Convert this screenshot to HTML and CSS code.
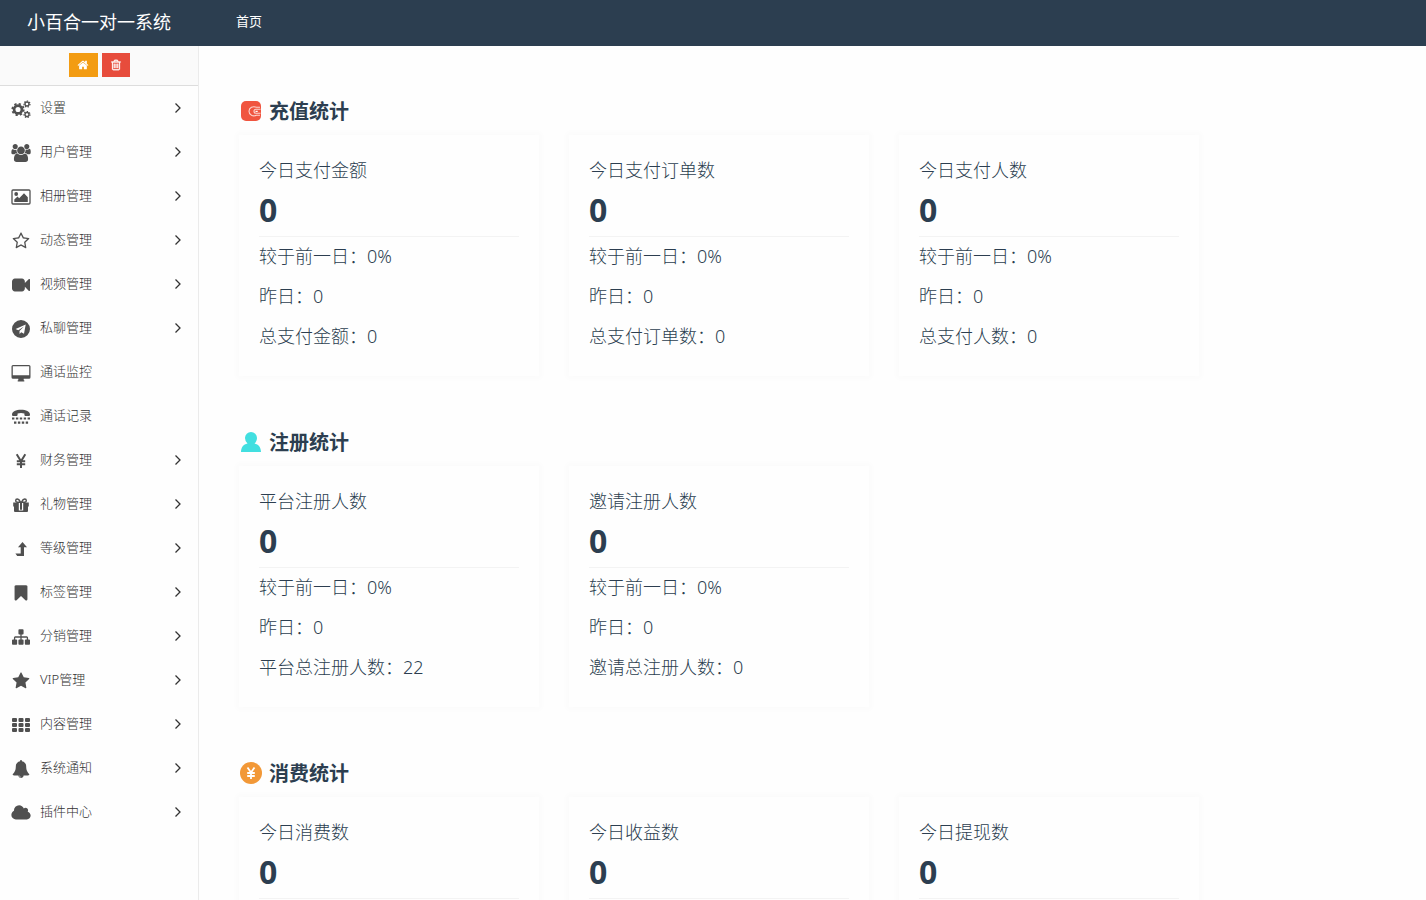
FILE: index.html
```
<!DOCTYPE html>
<html lang="zh-CN">
<head>
    <meta charset="UTF-8">
    <meta name="viewport" content="width=device-width, initial-scale=1.0">
    <title>小百合一对一系统</title>
    <link rel="stylesheet" href="styles.css">
</head>
<body>
    <!-- icons -->
    <svg class="sprite" aria-hidden="true">
        <symbol id="i-home" viewBox="0 0 1792 1792"><path d="M1472 992v480q0 26-19 45t-45 19h-384v-384h-256v384h-384q-26 0-45-19t-19-45v-480q0-1 .5-3t.5-3l575-474 575 474q1 2 1 6zm223-69l-62 74q-8 9-21 11h-3q-13 0-21-7l-692-577-692 577q-12 8-24 7-13-2-21-11l-62-74q-8-10-7-23.5t11-21.5l719-599q32-26 76-26t76 26l244 204v-195q0-14 9-23t23-9h192q14 0 23 9t9 23v408l219 182q10 8 11 21.5t-7 23.5z"/></symbol>
        <symbol id="i-trash" viewBox="0 0 1792 1792"><path stroke="currentColor" stroke-width="50" d="M704 736v576q0 14-9 23t-23 9h-64q-14 0-23-9t-9-23v-576q0-14 9-23t23-9h64q14 0 23 9t9 23zm256 0v576q0 14-9 23t-23 9h-64q-14 0-23-9t-9-23v-576q0-14 9-23t23-9h64q14 0 23 9t9 23zm256 0v576q0 14-9 23t-23 9h-64q-14 0-23-9t-9-23v-576q0-14 9-23t23-9h64q14 0 23 9t9 23zm128 724v-948h-896v948q0 22 7 40.500t14.500 27 10.500 8.500h832q3 0 10.500-8.500t14.500-27 7-40.500zm-672-1076h448l-48-117q-7-9-17-11h-317q-10 2-17 11zm928 32v64q0 14-9 23t-23 9h-96v948q0 83-47 143.500t-113 60.500h-832q-66 0-113-58.500t-47-141.500v-952h-96q-14 0-23-9t-9-23v-64q0-14 9-23t23-9h309l70-167q15-37 54-63t79-26h320q40 0 79 26t54 63l70 167h309q14 0 23 9t9 23z"/></symbol>
        <symbol id="i-cogs" viewBox="0 0 20 18">
            <g fill="none" stroke="currentColor">
                <circle cx="7" cy="9.500" r="3.900" stroke-width="2.700"/>
                <circle cx="7" cy="9.500" r="5.700" stroke-width="1.800" stroke-dasharray="2.240 2.240"/>
                <circle cx="16" cy="4" r="2" stroke-width="1.400"/>
                <circle cx="16" cy="4" r="3" stroke-width="1.200" stroke-dasharray="1.350 1.350"/>
                <circle cx="16" cy="14.500" r="2" stroke-width="1.400"/>
                <circle cx="16" cy="14.500" r="3" stroke-width="1.200" stroke-dasharray="1.350 1.350"/>
            </g>
        </symbol>
        <symbol id="i-users" viewBox="0 0 2048 1792"><path d="M657 896q-162 5-265 128h-134q-82 0-138-40.500t-56-118.500q0-353 124-353 6 0 43.500 21t97.500 42.500 119 21.500q67 0 133-23-5 37-5 66 0 159 93 293zm1071 637q0 120-73 189.500t-194 69.500h-874q-121 0-194-69.500t-73-189.500q0-53 3.500-103.500t14-109 26.500-108.500 43-97.500 62-81 85.500-53.500 111.500-20q10 0 43 21.500t73 48 107 48 135 21.500 135-21.500 107-48 73-48 43-21.500q61 0 111.500 20t85.500 53.500 62 81 43 97.500 26.500 108.500 14 109 3.500 103.500zm-1024-1277q0 106-75 181t-181 75-181-75-75-181 75-181 181-75 181 75 75 181zm704 384q0 159-112.500 271.500t-271.500 112.500-271.500-112.500-112.500-271.500 112.500-271.500 271.500-112.500 271.500 112.500 112.500 271.500zm576 225q0 78-56 118.500t-138 40.500h-134q-103-123-265-128 93-134 93-293 0-29-5-66 66 23 133 23 59 0 119-21.500t97.500-42.500 43.500-21q124 0 124 353zm-128-609q0 106-75 181t-181 75-181-75-75-181 75-181 181-75 181 75 75 181z"/></symbol>
        <symbol id="i-image" viewBox="0 0 20 18">
            <rect x="1" y="2" width="18" height="14" rx="1" fill="none" stroke="currentColor" stroke-width="1.300"/>
            <circle cx="5.200" cy="6" r="1.900"/>
            <path d="M3.300 14v-2.400L6.500 8.500 8.200 10.200 13 5.300 16.800 9.200V14z"/>
        </symbol>
        <symbol id="i-star-o" viewBox="0 0 1792 1792"><path d="M1201 1004l306-297-422-62-189-382-189 382-422 62 306 297-73 421 378-199 377 199zm527-357q0 22-26 48l-363 354 86 500q1 7 1 20 0 50-41 50-19 0-40-12l-449-236-449 236q-22 12-40 12-21 0-31.500-14.500t-10.500-35.500q0-6 2-20l86-500-364-354q-25-27-25-48 0-37 56-46l502-73 225-455q19-41 49-41t49 41l225 455 502 73q56 9 56 46z"/></symbol>
        <symbol id="i-video" viewBox="0 0 1792 1792"><path d="M1792 352v1088q0 42-39 59-13 5-25 5-27 0-45-19l-403-403v166q0 119-84.500 203.500t-203.500 84.500h-704q-119 0-203.500-84.500t-84.500-203.500v-704q0-119 84.500-203.500t203.500-84.500h704q119 0 203.500 84.500t84.500 203.500v165l403-402q18-19 45-19 12 0 25 5 39 17 39 59z"/></symbol>
        <symbol id="i-telegram" viewBox="0 0 18 18"><path fill-rule="evenodd" d="M9 0a9 9 0 1 1 0 18A9 9 0 0 1 9 0zM13.700 4.600 3.600 8.900l2.700 1.300 5.600-3.800-4.400 4.500.1 3.100 1.600-1.800 2.800 1.500z"/></symbol>
        <symbol id="i-desktop" viewBox="0 0 20 18"><path fill-rule="evenodd" d="M2 1h16a1.500 1.500 0 0 1 1.500 1.500v10.800a1.500 1.500 0 0 1-1.500 1.500h-5.300v1.400h.6v1.300H6.700v-1.300h.6v-1.400H2a1.500 1.500 0 0 1-1.500-1.500V2.500A1.500 1.500 0 0 1 2 1zM1.800 2.300v8.900h16.400V2.300z"/></symbol>
        <symbol id="i-tty" viewBox="0 0 18 18">
            <path d="M0 6.500C0 3.500 4 1.800 9 1.800s9 1.700 9 4.700c0 1-.5 1.500-1.500 1.500h-2.600c-1 0-1.500-.5-1.500-1.500V5.400C10.500 4.700 7.500 4.700 5.600 5.400v1.100C5.600 7.500 5 8 4 8H1.500C.5 8 0 7.500 0 6.500z"/>
            <path d="M0 9.500h2.400v2H0zM3.900 9.500h2.400v2H3.900zM7.800 9.500h2.400v2H7.800zM11.700 9.500h2.400v2h-2.400zM15.600 9.500H18v2h-2.400zM2 13.500h2.400v2.200H2zM5.900 13.500h2.400v2.200H5.900zM9.800 13.500h2.400v2.200H9.800zM13.700 13.500h2.400v2.200h-2.400z"/>
        </symbol>
        <symbol id="i-yen" viewBox="0 0 18 18"><path fill="none" stroke="currentColor" stroke-width="2" d="M4.700 2.300 9 9.300l4.300-7M9 9v7M4.800 9.300h8.400M4.800 12.200h8.400"/></symbol>
        <symbol id="i-gift" viewBox="0 0 18 18">
            <path d="M1.200 6.500h5.600v4H1.200zM2 10.500h4.800V16H3a1 1 0 0 1-1-1zM11.200 6.500h5.600v4h-5.600zM11.200 10.500H16V15a1 1 0 0 1-1 1h-3.800zM6.800 14.600h4.400V16H6.800zM8 6.500h2v7.200H8z"/>
            <path fill="none" stroke="currentColor" stroke-width="1.400" d="M8.500 6C7.500 4 6.500 3 5.300 3a1.600 1.600 0 0 0 0 3.200h7.400a1.600 1.600 0 0 0 0-3.200C11.500 3 10.500 4 9.500 6"/>
        </symbol>
        <symbol id="i-level-up" viewBox="0 0 18 18"><path d="M10.500 2 15 7.200h-3V16H5.200L3.400 13.500h5.300V7.200H6z"/></symbol>
        <symbol id="i-bookmark" viewBox="0 0 1792 1792"><path d="M1420 128q23 0 44 9 33 13 52.500 41t19.500 62v1289q0 34-19.500 62t-52.500 41q-19 8-44 8-48 0-83-32l-441-424-441 424q-36 33-83 33-23 0-44-9-33-13-52.500-41t-19.500-62v-1289q0-34 19.500-62t52.500-41q21-9 44-9h1048z"/></symbol>
        <symbol id="i-sitemap" viewBox="0 0 1792 1792"><path d="M1792 1248v320q0 40-28 68t-68 28h-320q-40 0-68-28t-28-68v-320q0-40 28-68t68-28h96v-192h-512v192h96q40 0 68 28t28 68v320q0 40-28 68t-68 28h-320q-40 0-68-28t-28-68v-320q0-40 28-68t68-28h96v-192h-512v192h96q40 0 68 28t28 68v320q0 40-28 68t-68 28h-320q-40 0-68-28t-28-68v-320q0-40 28-68t68-28h96v-192q0-52 38-90t90-38h512v-192h-96q-40 0-68-28t-28-68v-320q0-40 28-68t68-28h320q40 0 68 28t28 68v320q0 40-28 68t-68 28h-96v192h512q52 0 90 38t38 90v192h96q40 0 68 28t28 68z"/></symbol>
        <symbol id="i-star" viewBox="0 0 1792 1792"><path d="M1728 647q0 22-26 48l-363 354 86 500q1 7 1 20 0 21-10.500 35.500t-30.500 14.500q-19 0-40-12l-449-236-449 236q-22 12-40 12-21 0-31.500-14.500t-10.500-35.500q0-6 2-20l86-500-364-354q-25-27-25-48 0-37 56-46l502-73 225-455q19-41 49-41t49 41l225 455 502 73q56 9 56 46z"/></symbol>
        <symbol id="i-th" viewBox="0 0 18 18">
            <g><rect x="0" y="2" width="5" height="4" rx="1"/><rect x="6.500" y="2" width="5" height="4" rx="1"/><rect x="13" y="2" width="5" height="4" rx="1"/></g>
            <g><rect x="0" y="7" width="5" height="4" rx="1"/><rect x="6.500" y="7" width="5" height="4" rx="1"/><rect x="13" y="7" width="5" height="4" rx="1"/></g>
            <g><rect x="0" y="12" width="5" height="4" rx="1"/><rect x="6.500" y="12" width="5" height="4" rx="1"/><rect x="13" y="12" width="5" height="4" rx="1"/></g>
        </symbol>
        <symbol id="i-bell" viewBox="0 0 1792 1792"><path d="M912 1696q0-16-16-16-59 0-101.500-42.500t-42.500-101.500q0-16-16-16t-16 16q0 73 51.500 124.500t124.500 51.500q16 0 16-16zm816-288q0 52-38 90t-90 38h-448q0 106-75 181t-181 75-181-75-75-181h-448q-52 0-90-38t-38-90q50-42 91-88t85-119.500 74.500-158.500 50-206 19.500-260q0-152 117-282.500t307-158.500q-8-19-8-39 0-40 28-68t68-28 68 28 28 68q0 20-8 39 190 28 307 158.500t117 282.500q0 139 19.500 260t50 206 74.500 158.500 85 119.500 91 88z"/></symbol>
        <symbol id="i-cloud" viewBox="0 0 2048 1792"><path d="M1984 1152q0 159-112.500 271.500t-271.500 112.500h-1088q-185 0-316.500-131.500t-131.500-316.500q0-132 71-241.500t187-163.500q-2-28-2-43 0-212 150-362t362-150q158 0 286.500 88t187.500 230q70-62 166-62 106 0 181 75t75 181q0 75-41 138 129 30 213 134.500t84 239.500z"/></symbol>
        <symbol id="i-angle" viewBox="0 0 8 12"><path fill="none" stroke="currentColor" stroke-width="1.300" d="M1.500 1.500 6 6l-4.500 4.500"/></symbol>
    </svg>

    <header class="navbar">
        <a class="brand" href="#">小百合一对一系统</a>
        <nav><a class="nav-link" href="#">首页</a></nav>
    </header>

    <div class="layout">
        <aside class="sidebar">
            <div class="shortcuts">
                <button class="btn btn-warning" type="button" aria-label="首页"><svg><use href="#i-home"/></svg></button>
                <button class="btn btn-danger" type="button" aria-label="清除缓存"><svg><use href="#i-trash"/></svg></button>
            </div>
            <nav class="menu">
                <a href="#"><svg class="icon"><use href="#i-cogs"/></svg><span>设置</span><svg class="angle"><use href="#i-angle"/></svg></a>
                <a href="#"><svg class="icon"><use href="#i-users"/></svg><span>用户管理</span><svg class="angle"><use href="#i-angle"/></svg></a>
                <a href="#"><svg class="icon"><use href="#i-image"/></svg><span>相册管理</span><svg class="angle"><use href="#i-angle"/></svg></a>
                <a href="#"><svg class="icon"><use href="#i-star-o"/></svg><span>动态管理</span><svg class="angle"><use href="#i-angle"/></svg></a>
                <a href="#"><svg class="icon"><use href="#i-video"/></svg><span>视频管理</span><svg class="angle"><use href="#i-angle"/></svg></a>
                <a href="#"><svg class="icon"><use href="#i-telegram"/></svg><span>私聊管理</span><svg class="angle"><use href="#i-angle"/></svg></a>
                <a href="#"><svg class="icon"><use href="#i-desktop"/></svg><span>通话监控</span></a>
                <a href="#"><svg class="icon"><use href="#i-tty"/></svg><span>通话记录</span></a>
                <a href="#"><svg class="icon"><use href="#i-yen"/></svg><span>财务管理</span><svg class="angle"><use href="#i-angle"/></svg></a>
                <a href="#"><svg class="icon"><use href="#i-gift"/></svg><span>礼物管理</span><svg class="angle"><use href="#i-angle"/></svg></a>
                <a href="#"><svg class="icon"><use href="#i-level-up"/></svg><span>等级管理</span><svg class="angle"><use href="#i-angle"/></svg></a>
                <a href="#"><svg class="icon"><use href="#i-bookmark"/></svg><span>标签管理</span><svg class="angle"><use href="#i-angle"/></svg></a>
                <a href="#"><svg class="icon"><use href="#i-sitemap"/></svg><span>分销管理</span><svg class="angle"><use href="#i-angle"/></svg></a>
                <a href="#"><svg class="icon"><use href="#i-star"/></svg><span>VIP管理</span><svg class="angle"><use href="#i-angle"/></svg></a>
                <a href="#"><svg class="icon"><use href="#i-th"/></svg><span>内容管理</span><svg class="angle"><use href="#i-angle"/></svg></a>
                <a href="#"><svg class="icon"><use href="#i-bell"/></svg><span>系统通知</span><svg class="angle"><use href="#i-angle"/></svg></a>
                <a href="#"><svg class="icon"><use href="#i-cloud"/></svg><span>插件中心</span><svg class="angle"><use href="#i-angle"/></svg></a>
            </nav>
        </aside>

        <main class="content">
            <section class="stats">
                <h2>
                    <svg viewBox="0 0 22 22"><rect x="1" y="1" width="20" height="20" rx="5" fill="#f0553f"/><path fill="none" stroke="#fbd5cf" stroke-width="1.100" d="M20 7.300h-3.500c-3.500-1.500-7.500.2-7.500 4s4 5.400 7.500 4H20M20.500 9.300H16a2 2 0 0 0 0 4h4.500"/><path fill="#fff" d="M15.500 10.700h2.200v1.400h-2.200z"/></svg>
                    充值统计
                </h2>
                <div class="cards">
                    <div class="card">
                        <p>今日支付金额</p>
                        <strong>0</strong>
                        <ul>
                            <li>较于前一日：0%</li>
                            <li>昨日：0</li>
                            <li>总支付金额：0</li>
                        </ul>
                    </div>
                    <div class="card">
                        <p>今日支付订单数</p>
                        <strong>0</strong>
                        <ul>
                            <li>较于前一日：0%</li>
                            <li>昨日：0</li>
                            <li>总支付订单数：0</li>
                        </ul>
                    </div>
                    <div class="card">
                        <p>今日支付人数</p>
                        <strong>0</strong>
                        <ul>
                            <li>较于前一日：0%</li>
                            <li>昨日：0</li>
                            <li>总支付人数：0</li>
                        </ul>
                    </div>
                </div>
            </section>

            <section class="stats">
                <h2>
                    <svg viewBox="0 0 22 22"><path fill="#42dfe0" d="M11 1a6 6 0 0 1 6 6c0 2.200-1 4.200-2.500 5.500C18.500 13.300 21 16.500 21 21H1c0-4.500 2.500-7.700 6.500-8.500A7.200 7.200 0 0 1 5 7a6 6 0 0 1 6-6z"/></svg>
                    注册统计
                </h2>
                <div class="cards">
                    <div class="card">
                        <p>平台注册人数</p>
                        <strong>0</strong>
                        <ul>
                            <li>较于前一日：0%</li>
                            <li>昨日：0</li>
                            <li>平台总注册人数：22</li>
                        </ul>
                    </div>
                    <div class="card">
                        <p>邀请注册人数</p>
                        <strong>0</strong>
                        <ul>
                            <li>较于前一日：0%</li>
                            <li>昨日：0</li>
                            <li>邀请总注册人数：0</li>
                        </ul>
                    </div>
                </div>
            </section>

            <section class="stats">
                <h2>
                    <svg viewBox="0 0 22 22"><circle cx="11" cy="11" r="11" fill="#f29837"/><path fill="none" stroke="#fff" stroke-width="1.800" d="M7.500 5.500 11 10.500l3.500-5M11 10v7M7.200 11h7.600M7.200 14h7.600"/></svg>
                    消费统计
                </h2>
                <div class="cards">
                    <div class="card">
                        <p>今日消费数</p>
                        <strong>0</strong>
                    </div>
                    <div class="card">
                        <p>今日收益数</p>
                        <strong>0</strong>
                    </div>
                    <div class="card">
                        <p>今日提现数</p>
                        <strong>0</strong>
                    </div>
                </div>
            </section>
        </main>
    </div>
</body>
</html>
```
FILE: styles.css
```
* {
    box-sizing: border-box;
}

body {
    display: flex;
    flex-direction: column;
    height: 100vh;
    margin: 0;
    overflow: hidden;
    font-family: "Noto Sans", "Noto Sans CJK SC", sans-serif;
    font-size: 13px;
    color: #2c3e50;
    background-color: #fefefe;
}

a {
    color: inherit;
    text-decoration: none;
}

svg {
    fill: currentColor;
}

.sprite {
    display: none;
}

/* top bar */
.navbar {
    display: flex;
    flex: none;
    align-items: center;
    height: 46px;
    padding-left: 27px;
    padding-bottom: 5px;
    color: #fff;
    background-color: #2c3e50;
}

.brand {
    width: 209px;
    font-size: 18px;
}

.layout {
    display: flex;
    flex: 1;
    min-height: 0;
}

/* sidebar */
.sidebar {
    flex: none;
    width: 199px;
    border-right: 1px solid #ebebeb;
}

.shortcuts {
    display: flex;
    justify-content: center;
    gap: 4px;
    height: 40px;
    padding-top: 7px;
    border-bottom: 1px solid #ddd;
    background-color: #fafafa;
}

.btn {
    display: flex;
    align-items: center;
    justify-content: center;
    width: 29px;
    height: 24px;
    padding: 0;
    border: none;
    color: #fff;
    cursor: pointer;
}

.btn svg {
    width: 12px;
    height: 12px;
}

.btn-warning {
    background-color: #f39c12;
}

.btn-danger {
    width: 28px;
    background-color: #e74c3c;
}

.menu a {
    display: flex;
    align-items: center;
    gap: 8px;
    height: 44px;
    padding: 0 16px 0 10px;
    font-weight: 300;
    color: #333;
}

.menu span {
    padding-bottom: 3px;
}

.icon {
    width: 22px;
    height: 18px;
    margin-top: 2px;
    color: #505050;
}

.angle {
    width: 8px;
    height: 12px;
    margin-left: auto;
}

/* statistics */
.content {
    flex: 1;
    padding: 44px 40px 0;
    overflow: hidden;
}

.stats {
    margin-bottom: 45px;
}

.stats h2 {
    display: flex;
    align-items: center;
    gap: 7px;
    height: 40px;
    margin: 0 0 5px;
    font-size: 20px;
}

.stats h2 svg {
    width: 22px;
    height: 22px;
    margin-top: 2px;
    margin-left: 1px;
}

.cards {
    display: flex;
    flex-wrap: wrap;
    gap: 30px;
}

.card {
    width: 300px;
    min-height: 241px;
    padding: 15px 20px 20px;
    font-size: 18px;
    font-weight: 300;
    line-height: 40px;
    background-color: #fefefe;
    box-shadow: 0 0 6px 2px #fafafa;
}

.card p {
    margin: 0;
}

.card strong {
    display: block;
    padding-bottom: 6px;
    border-bottom: 1px solid #f3f3f3;
    font-size: 32px;
    font-weight: 700;
}

.card ul {
    margin: 0;
    padding: 0;
    margin-top: -1px;
    list-style: none;
}
```
